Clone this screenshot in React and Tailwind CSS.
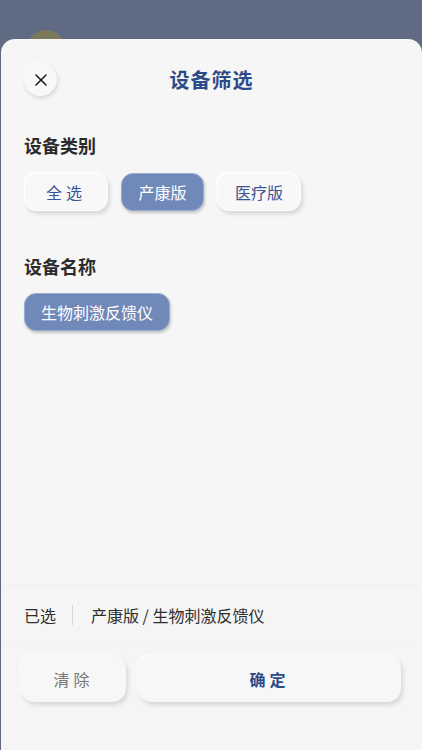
import { X } from "lucide-react";

const chipBase =
  "h-[38px] rounded-[12px] flex items-center justify-center text-[16px]";
const chipIdle =
  "bg-[#f8f8f8] text-[#3a5494] shadow-[2px_3px_4px_rgba(0,0,0,0.13),-1px_-1px_2px_rgba(255,255,255,0.9)] border border-white";
const chipActive =
  "bg-[#7189b9] text-white shadow-[1px_2px_3px_rgba(0,0,0,0.2)] border border-[#9aabd0]";

export default function App() {
  return (
    <div
      className="relative h-[750px] w-[422px] overflow-hidden bg-[#5f6b83] flex flex-col"
      style={{ fontFamily: '"Noto Sans CJK SC", "Noto Sans", sans-serif' }}
    >
      <div className="absolute left-[27px] top-[30px] w-[38px] h-[38px] rounded-full bg-[#7d7a5c]" />
      <div className="h-[39px] shrink-0" />
      <div className="relative flex-1 ml-px bg-[#f6f6f6] rounded-t-[14px] flex flex-col">
        <div className="relative h-[82px] flex items-center justify-center">
          <button className="absolute left-[23px] top-[24px] w-[33px] h-[33px] rounded-full bg-[#f8f8f8] flex items-center justify-center shadow-[1px_2px_4px_rgba(0,0,0,0.14),-1px_-1px_2px_rgba(255,255,255,0.9)]">
            <X size={20} strokeWidth={1.8} color="#1a1a1a" />
          </button>
          <div className="text-[20px] font-bold text-[#2c4a88] tracking-[1px]">设备筛选</div>
        </div>

        <div className="px-[23px]">
          <div className="mt-[11px] text-[18px] font-semibold text-[#2b2b2b] leading-[26px]">设备类别</div>
          <div className="mt-[15px] flex gap-[13px]">
            <div className={`${chipBase} ${chipIdle} w-[84px] tracking-[4px]`}>全选</div>
            <div className={`${chipBase} ${chipActive} w-[83px]`}>产康版</div>
            <div className={`${chipBase} ${chipIdle} w-[84px]`}>医疗版</div>
          </div>

          <div className="mt-[42px] text-[18px] font-semibold text-[#2b2b2b] leading-[26px]">设备名称</div>
          <div className="mt-[14px] flex">
            <div className={`${chipBase} ${chipActive} w-[146px]`}>生物刺激反馈仪</div>
          </div>
        </div>

        <div className="flex-1" />

        <div className="bg-[#f5f5f5] shadow-[0_-1px_3px_rgba(0,0,0,0.04)]">
          <div className="h-[60px] px-[23px] flex items-center text-[16px] text-[#2e2e2e] border-b border-[#f1f1f1]">
            <span>已选</span>
            <span className="ml-[16px] mr-[18px] w-px h-[20px] bg-[#d6d6d6]" />
            <span>产康版 / 生物刺激反馈仪</span>
          </div>
          <div className="px-[20px] pt-[10px] pb-[48px] flex gap-[12px]">
            <button className="w-[105px] h-[47px] rounded-[14px] bg-[#f7f7f7] text-[16px] text-[#777777] tracking-[4px] shadow-[2px_3px_4px_rgba(0,0,0,0.12),-1px_-1px_2px_rgba(255,255,255,0.9)]">
              清除
            </button>
            <button className="flex-1 mr-[1px] h-[47px] rounded-[14px] bg-[#f7f7f7] text-[16px] font-bold text-[#2c4a88] tracking-[4px] shadow-[2px_3px_4px_rgba(0,0,0,0.12),-1px_-1px_2px_rgba(255,255,255,0.9)]">
              确定
            </button>
          </div>
        </div>
      </div>
    </div>
  );
}
